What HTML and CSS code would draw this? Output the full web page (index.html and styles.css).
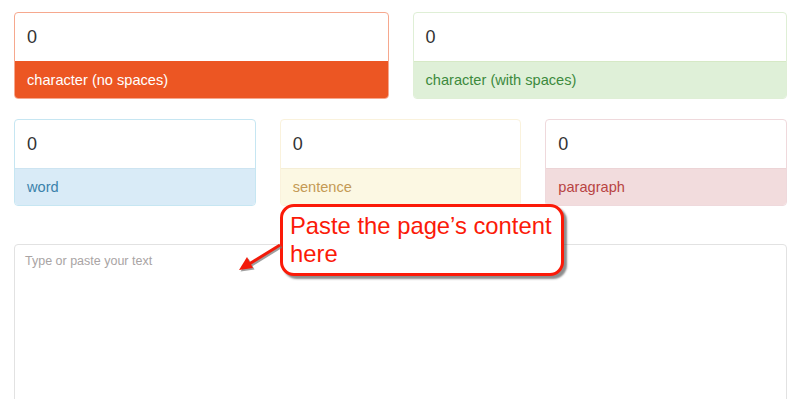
FILE: index.html
```html
<!DOCTYPE html>
<html>
<head>
<meta charset="utf-8">
<link rel="stylesheet" href="styles.css">
</head>
<body>
<div class="page">
  <div class="row row-2">
    <div class="card c-orange"><div class="value">0</div><div class="label">character (no spaces)</div></div>
    <div class="card c-green"><div class="value">0</div><div class="label">character (with spaces)</div></div>
  </div>
  <div class="row row-3">
    <div class="card c-blue"><div class="value">0</div><div class="label">word</div></div>
    <div class="card c-yellow"><div class="value">0</div><div class="label">sentence</div></div>
    <div class="card c-red"><div class="value">0</div><div class="label">paragraph</div></div>
  </div>
  <div class="editor">
    <textarea class="text" placeholder="Type or paste your text"></textarea>
  </div>
  <div class="callout">Paste the page’s content<br>here</div>
  <svg class="arrow" width="60" height="45" viewBox="0 0 60 45">
    <g transform="translate(1.5,1.5)" fill="#777" stroke="#777" opacity="0.7">
      <line x1="50" y1="5" x2="16" y2="26" stroke-width="3"/>
      <polygon points="9,30 17,17 23,28" stroke="none"/>
    </g>
    <line x1="50" y1="5" x2="16" y2="26" stroke="#f21b0a" stroke-width="3"/>
    <polygon points="9,30 17,17 23,28" fill="#f21b0a"/>
  </svg>
</div>
</body>
</html>
```
FILE: styles.css
```css
html, body {
  margin: 0;
  padding: 0;
  background: #fff;
  font-family: "Liberation Sans", Arial, sans-serif;
}
.page {
  position: relative;
  padding: 12px 13px 0 14px;
  height: 387px;
  overflow: hidden;
}
.row {
  display: grid;
  gap: 24px;
}
.row-2 {
  grid-template-columns: 1fr 1fr;
  margin-bottom: 20px;
}
.row-3 {
  grid-template-columns: 1fr 1fr 1fr;
  margin-bottom: 38px;
}
.card {
  border: 1px solid #ddd;
  border-radius: 4px;
  overflow: hidden;
  background: #fff;
}
.value {
  height: 48px;
  line-height: 48px;
  padding: 0 12px;
  font-size: 18px;
  color: #333;
}
.label {
  height: 36px;
  line-height: 36px;
  padding: 0 12px;
  font-size: 14.6px;
  border-top: 1px solid #ddd;
}
.c-orange { border-color: #f6a88e; }
.c-orange .label { background: #ec5623; color: #fff; border-top-color: #ec5623; }
.c-green { border-color: #dfefd6; }
.c-green .label { background: #dff0d8; color: #3c8a3d; border-top-color: #d6e9c6; }
.c-blue { border-color: #c6e6f2; }
.c-blue .label { background: #d9ebf7; color: #3b82ab; border-top-color: #cde4f1; }
.c-yellow { border-color: #faf2dc; }
.c-yellow .label { background: #fcf8e3; color: #c49a55; border-top-color: #f5eed6; }
.c-red { border-color: #efd9dc; }
.c-red .label { background: #f2dcdd; color: #b84443; border-top-color: #ecd4d6; }
.editor {
  height: 160px;
}
.text {
  display: block;
  box-sizing: border-box;
  width: 100%;
  height: 100%;
  border: 1px solid #e2e2e2;
  border-radius: 4px;
  padding: 9px 10px;
  font-family: "Liberation Sans", Arial, sans-serif;
  font-size: 12.5px;
  resize: none;
  outline: none;
}
.text::placeholder { color: #a9a4a4; }
.callout {
  position: absolute;
  left: 280px;
  top: 204px;
  box-sizing: border-box;
  width: 284px;
  height: 72px;
  border: 3px solid #fb1a08;
  border-radius: 14px;
  background: #fff;
  box-shadow: 3px 3px 2px rgba(80,80,80,0.65);
  padding: 5px 0 0 7px;
  color: #fb1a08;
  font-size: 23.8px;
  line-height: 28px;
}
.arrow {
  position: absolute;
  left: 230px;
  top: 240px;
}
```
